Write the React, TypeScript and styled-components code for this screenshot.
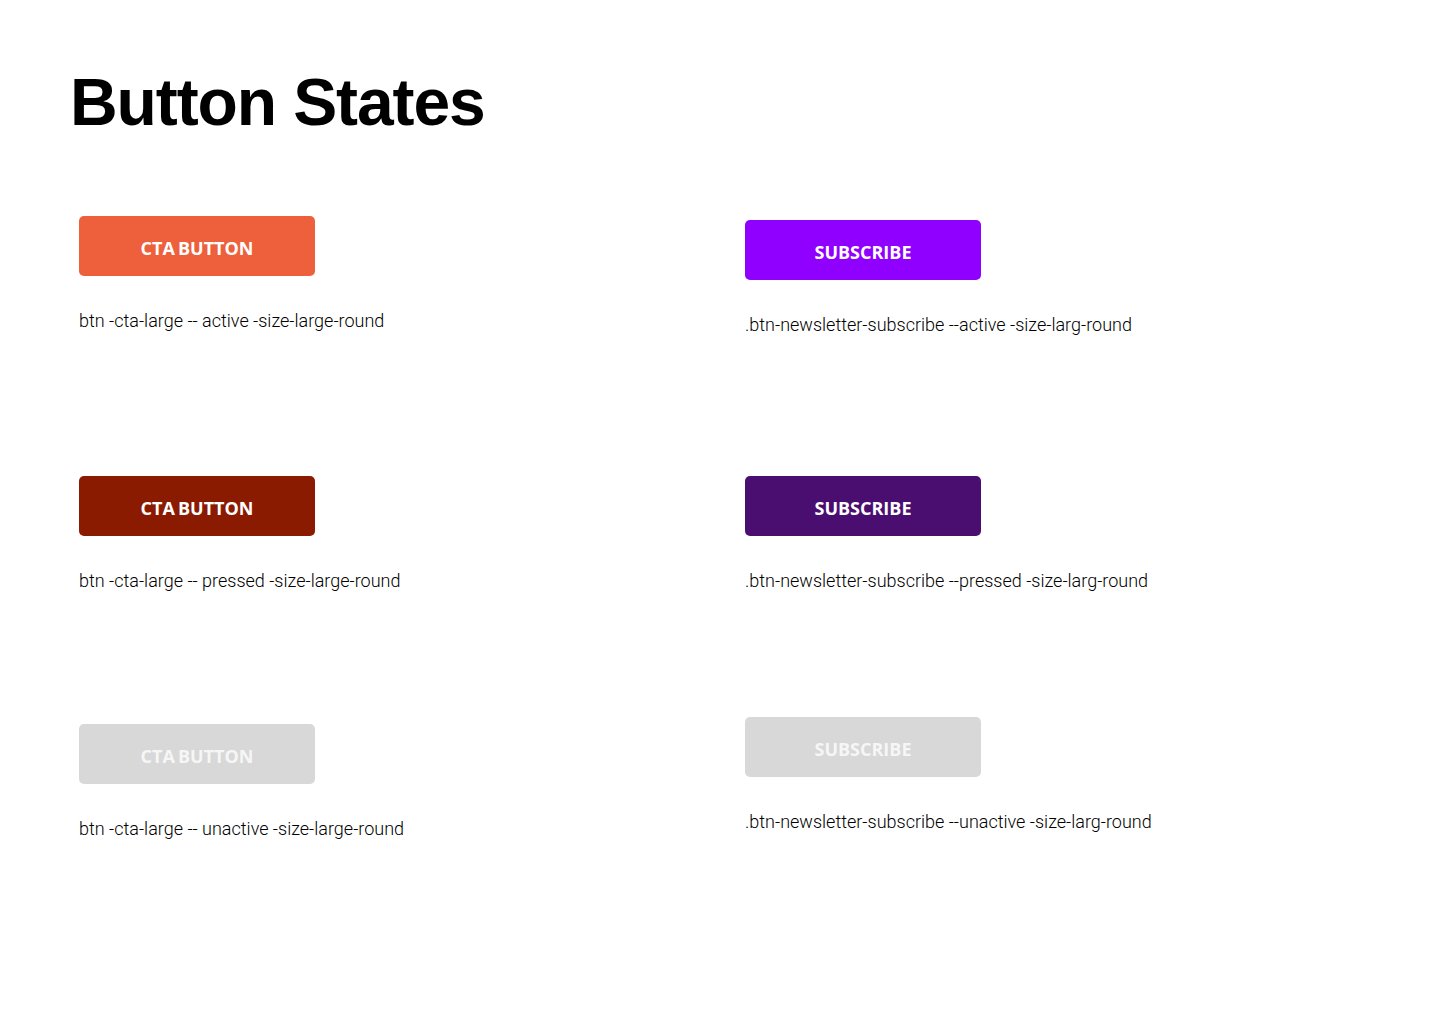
import React from 'react';
import styled, { createGlobalStyle } from 'styled-components';

const GlobalStyle = createGlobalStyle`
    html, body {
        margin: 0;
        padding: 0;
        background: #ffffff;
    }
`;

const Page = styled.div`
    width: 1440px;
    min-height: 1025px;
    padding: 69px 0 0 70px;
    box-sizing: border-box;
    font-family: 'Liberation Sans', Arial, sans-serif;
`;

const Title = styled.h1`
    margin: 0;
    font-size: 66px;
    line-height: 1;
    font-weight: 700;
    color: #000;
    letter-spacing: -1.1px;
`;

const Grid = styled.div`
    display: grid;
    grid-template-columns: 666px 1fr;
    grid-auto-rows: 256px;
    margin-top: 70px;
    padding-left: 9px;
`;

// offset nudges each cell down a few px inside its row, as in the mock
const Cell = styled.div<{ $offset: number }>`
    display: flex;
    flex-direction: column;
    align-items: flex-start;
    padding-top: ${(p) => p.$offset}px;
`;

const Button = styled.button<{ $bg: string; $fg: string }>`
    width: 236px;
    height: 60px;
    border: none;
    border-radius: 5px;
    background: ${(p) => p.$bg};
    color: ${(p) => p.$fg};
    font-family: 'Open Sans', 'Noto Sans', sans-serif;
    font-weight: 700;
    font-size: 18px;
    word-spacing: -1.5px;
    padding: 3px 0 0;
    cursor: pointer;
`;

const Label = styled.p`
    margin: 34px 0 0;
    font-family: Roboto, 'DejaVu Sans', sans-serif;
    font-weight: 300;
    font-size: 18px;
    line-height: 22px;
    color: #000;
`;

type Item = { text: string; label: string; bg: string; fg: string; offset: number };

const cells: Item[] = [
    { text: 'CTA BUTTON', label: 'btn -cta-large -- active -size-large-round', bg: '#EE5F3B', fg: '#ffffff', offset: 11 },
    { text: 'SUBSCRIBE', label: '.btn-newsletter-subscribe --active -size-larg-round', bg: '#8F00FF', fg: '#ffffff', offset: 15 },
    { text: 'CTA BUTTON', label: 'btn -cta-large -- pressed -size-large-round', bg: '#8A1A00', fg: '#ffffff', offset: 15 },
    { text: 'SUBSCRIBE', label: '.btn-newsletter-subscribe --pressed -size-larg-round', bg: '#4A0E70', fg: '#ffffff', offset: 15 },
    { text: 'CTA BUTTON', label: 'btn -cta-large -- unactive -size-large-round', bg: '#D8D8D8', fg: '#F6F6F6', offset: 7 },
    { text: 'SUBSCRIBE', label: '.btn-newsletter-subscribe --unactive -size-larg-round', bg: '#D8D8D8', fg: '#F6F6F6', offset: 0 },
];

export default function App() {
    return (
        <>
            <GlobalStyle />
            <Page>
                <Title>Button States</Title>
                <Grid>
                    {cells.map((item, i) => (
                        <Cell key={i} $offset={item.offset}>
                            <Button $bg={item.bg} $fg={item.fg}>{item.text}</Button>
                            <Label>{item.label}</Label>
                        </Cell>
                    ))}
                </Grid>
            </Page>
        </>
    );
}
